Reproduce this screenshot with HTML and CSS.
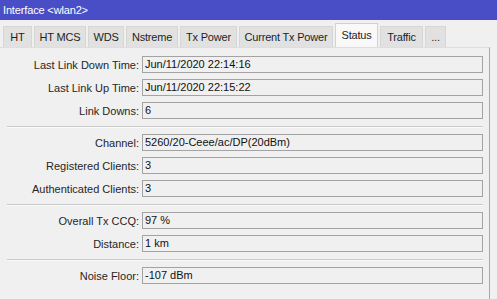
FILE: index.html
```html
<!DOCTYPE html>
<html>
<head>
<meta charset="utf-8">
<link rel="stylesheet" href="styles.css">
</head>
<body>
<div class="window">
  <div class="titlebar">Interface &lt;wlan2&gt;</div>
  <div class="tabs">
    <div class="tab w-ht">HT</div>
    <div class="tab w-htmcs">HT MCS</div>
    <div class="tab w-wds">WDS</div>
    <div class="tab w-nstreme">Nstreme</div>
    <div class="tab w-txpower">Tx Power</div>
    <div class="tab w-curtx">Current Tx Power</div>
    <div class="tab active w-status">Status</div>
    <div class="tab w-traffic">Traffic</div>
    <div class="tab w-more">...</div>
  </div>
  <div class="panel">
    <div class="form">
      <div class="row"><div class="label">Last Link Down Time:</div><div class="field">Jun/11/2020 22:14:16</div></div>
      <div class="row"><div class="label">Last Link Up Time:</div><div class="field">Jun/11/2020 22:15:22</div></div>
      <div class="row"><div class="label">Link Downs:</div><div class="field">6</div></div>
      <div class="sep"></div>
      <div class="row"><div class="label">Channel:</div><div class="field">5260/20-Ceee/ac/DP(20dBm)</div></div>
      <div class="row"><div class="label">Registered Clients:</div><div class="field">3</div></div>
      <div class="row"><div class="label">Authenticated Clients:</div><div class="field">3</div></div>
      <div class="sep"></div>
      <div class="row"><div class="label">Overall Tx CCQ:</div><div class="field">97 %</div></div>
      <div class="row"><div class="label">Distance:</div><div class="field">1 km</div></div>
      <div class="sep"></div>
      <div class="row"><div class="label">Noise Floor:</div><div class="field">-107 dBm</div></div>
    </div>
  </div>
</div>
</body>
</html>
```

FILE: styles.css
```css
html, body {
  margin: 0;
  padding: 0;
  background: #f0f0f0;
}
body {
  font-family: "Liberation Sans", Arial, sans-serif;
  font-size: 11px;
  color: #1e1e1e;
}
.window {
  width: 497px;
  height: 299px;
  display: flex;
  flex-direction: column;
  background: #f0f0f0;
  overflow: hidden;
}
.titlebar {
  height: 20px;
  line-height: 20px;
  background: #4a4ec6;
  color: #ffffff;
  padding-left: 3px;
  letter-spacing: -0.15px;
}
.tabs {
  height: 27px;
  display: flex;
  align-items: flex-end;
  gap: 2px;
  padding-left: 3px;
}
.tab {
  height: 20px;
  line-height: 20px;
  background: #e1e1e1;
  border: 1px solid #d6d6d6;
  border-bottom: none;
  text-align: center;
  box-sizing: content-box;
  color: #1e1e1e;
  letter-spacing: -0.2px;
  white-space: nowrap;
}
.tab.active {
  height: 23px;
  line-height: 22px;
  background: #f9f9f9;
  border-color: #d2d2d2;
  position: relative;
}
.w-ht { width: 27px; }
.w-htmcs { width: 50px; }
.w-wds { width: 34px; }
.w-nstreme { width: 50px; }
.w-txpower { width: 55px; }
.w-curtx { width: 92px; }
.w-status { width: 41px; }
.w-traffic { width: 41px; }
.w-more { width: 19px; }
.panel {
  flex: 1;
  width: 490px;
  border-right: 1px solid #a9a9a9;
  border-top: 1px solid #dedede;
  box-sizing: border-box;
}
.form {
  padding: 8px 0 0 0;
  display: flex;
  flex-direction: column;
  gap: 6px;
}
.row {
  display: grid;
  grid-template-columns: 139px 341px;
  column-gap: 3px;
  height: 17px;
  align-items: center;
}
.label {
  text-align: right;
  color: #262626;
  white-space: nowrap;
}
.field {
  height: 15px;
  line-height: 15px;
  border: 1px solid #a3a3a3;
  background: #f0f0f0;
  padding-left: 2px;
  color: #101010;
  white-space: nowrap;
}
.sep {
  height: 1px;
  margin: 1px 7px 0 7px;
  width: 476px;
  background: #c9c9c9;
  border-bottom: 1px solid #fafafa;
}
```
